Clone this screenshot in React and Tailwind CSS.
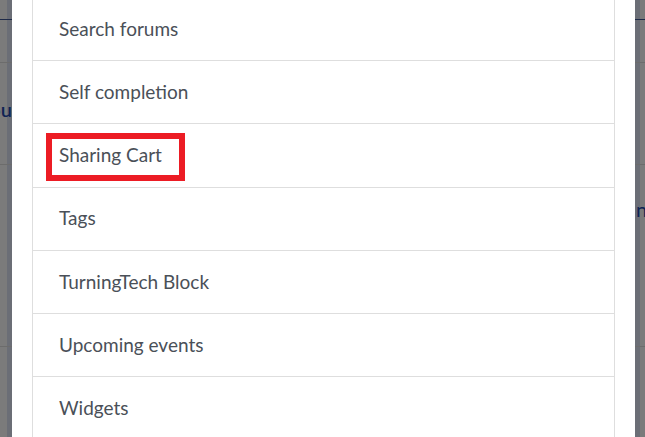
import React from "react";

const items = [
  "Search forums",
  "Self completion",
  "Sharing Cart",
  "Tags",
  "TurningTech Block",
  "Upcoming events",
  "Widgets",
];

// page content showing through the modal overlay, at the two edges
const Backdrop = ({ side }) => {
  const left = side === "left";
  return (
    <div
      className={`h-full overflow-hidden flex flex-col ${
        left
          ? "w-[12px] bg-[linear-gradient(to_right,#7b7b7b_7px,#6b6e76_7px)]"
          : "w-[10px] bg-[linear-gradient(to_right,#6b6e76_5px,#7b7b7b_5px)]"
      }`}
    >
      <div className="h-[20px] shrink-0 border-b border-[#1e2a48]" />
      <div className="h-[43px] shrink-0 border-b border-[#6c6c6c]" />
      <div
        className={`h-[102px] shrink-0 border-b border-[#6c6c6c] flex ${
          left ? "justify-end items-start pt-[36px]" : ""
        }`}
      >
        {left && (
          <span className="text-[20px] font-semibold leading-none text-[#0f2454] whitespace-nowrap">ou</span>
        )}
      </div>
      <div className="h-[182px] shrink-0 border-b border-[#6c6c6c] pt-[34px] pl-[1px]">
        {!left && <span className="text-[20px] leading-none text-[#0f2454]">n</span>}
      </div>
    </div>
  );
};

export default function App() {
  return (
    <div
      className="w-[645px] h-[437px] overflow-hidden flex bg-[#7b7b7b]"
      style={{ fontFamily: "Lato, 'Open Sans', sans-serif" }}
    >
      <Backdrop side="left" />
      <div className="h-full w-[623px] bg-white px-[20px] overflow-hidden">
        <ul className="mt-[-2.25px] border-x border-[#dedede]">
          {items.map((item) => (
            <li
              key={item}
              className="h-[63.25px] border-b border-[#dedede] flex items-center pl-[26px] text-[19px] text-[#4a5058]"
            >
              {item === "Sharing Cart" ? (
                <span className="ml-[-13px] mt-[4px] border-[6px] border-[#ec1c24] pl-[7px] pr-[17px] pt-[1px] pb-[5px] leading-[30px]">
                  {item}
                </span>
              ) : (
                item
              )}
            </li>
          ))}
        </ul>
      </div>
      <Backdrop side="right" />
    </div>
  );
}
